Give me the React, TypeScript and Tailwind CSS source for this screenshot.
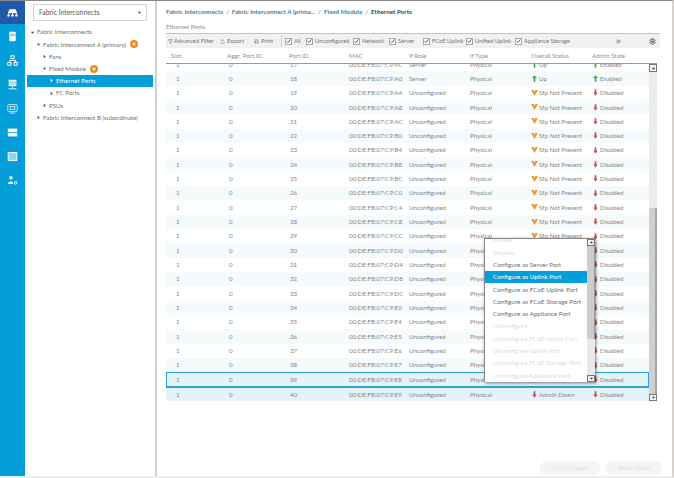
import { FC, ReactNode } from 'react';
import { ChevronsRight, Printer, Settings, Upload } from 'lucide-react';

type Port = { id: number; mac: string; role: string; status: string; admin: string };

const macs = ['9C', 'A0', 'A4', 'A8', 'AC', 'B0', 'B4', 'B8', 'BC', 'C0', 'C4', 'C8', 'CC', 'D0', 'D4', 'D8', 'DC', 'E0', 'E4', 'E5', 'E6', 'E7', 'E8', 'E9'];

const ports: Port[] = macs.map((m, i) => {
  const id = 17 + i;
  return {
    id,
    mac: `00:DE:FB:07:C9:${m}`,
    role: id < 19 ? 'Server' : 'Unconfigured',
    status: id < 19 ? 'Up' : id < 30 ? 'Sfp Not Present' : 'Admin Down',
    admin: id < 19 ? 'Enabled' : 'Disabled',
  };
});

const menu = [
  { label: 'Enable', off: true },
  { label: 'Disable', off: true },
  { label: 'Configure as Server Port' },
  { label: 'Configure as Uplink Port', active: true },
  { label: 'Configure as FCoE Uplink Port' },
  { label: 'Configure as FCoE Storage Port' },
  { label: 'Configure as Appliance Port' },
  { label: 'Unconfigure', off: true },
  { label: 'Unconfigure FCoE Uplink Port', off: true },
  { label: 'Unconfigure Uplink Port', off: true },
  { label: 'Unconfigure FCoE Storage Port', off: true },
  { label: 'Unconfigure Appliance Port', off: true },
];

const filters = [
  { label: 'All', w: 'w-[21px]' },
  { label: 'Unconfigured', w: 'w-[47px]' },
  { label: 'Network', w: 'w-[36px]' },
  { label: 'Server', w: 'w-[34px]' },
  { label: 'FCoE Uplink', w: 'w-[43px]' },
  { label: 'Unified Uplink', w: 'w-[49px]' },
  { label: 'Appliance Storage', w: 'w-[90px]' },
];

const tree = [
  { label: 'Fabric Interconnects', pad: 'pl-[3px]', open: true },
  { label: 'Fabric Interconnect A (primary)', pad: 'pl-[9px]', open: true, badge: true },
  { label: 'Fans', pad: 'pl-[15px]' },
  { label: 'Fixed Module', pad: 'pl-[15px]', open: true, badge: true },
  { label: 'Ethernet Ports', pad: 'pl-[22px]', active: true },
  { label: 'FC Ports', pad: 'pl-[22px]' },
  { label: 'PSUs', pad: 'pl-[15px]' },
  { label: 'Fabric Interconnect B (subordinate)', pad: 'pl-[9px]' },
];

const rowCols = 'grid grid-cols-[61px_62px_60px_60px_61px_61px_61px_57px] items-center';

const Caret: FC<{ open?: boolean; white?: boolean }> = ({ open, white }) => (
  <svg viewBox="0 0 6 6" className="h-[5px] w-[5px] shrink-0">
    <path d={open ? 'M1 2 L5 2 L3 4.5 Z' : 'M2 1 L4.5 3 L2 5 Z'} fill={white ? '#fff' : '#444'} />
  </svg>
);

const ScrollUp = () => (
  <svg viewBox="0 0 6 6" className="h-[5px] w-[5px] shrink-0">
    <path d="M1 4 L5 4 L3 1.5 Z" fill="#333" />
  </svg>
);

const Badge = () => (
  <svg viewBox="0 0 10 10" className="ml-[2px] h-2 w-2 shrink-0">
    <circle cx="5" cy="5" r="5" fill="#ef8a24" />
    <path d="M2.5 3.5 L5 7.5 L7.5 3.5 L6 3.5 L5 5 L4 3.5 Z" fill="#fff" />
  </svg>
);

const StatusIcon: FC<{ status: string }> = ({ status }) => {
  if (status === 'Up' || status === 'Enabled') {
    return (
      <svg viewBox="0 0 6 8" className="h-[7px] w-[5px] shrink-0">
        <path d="M3 0 L6 3.5 L4 3.5 L4 8 L2 8 L2 3.5 L0 3.5 Z" fill="#2fae3b" />
      </svg>
    );
  }
  if (status === 'Sfp Not Present') {
    return (
      <svg viewBox="0 0 8 7" className="h-[6px] w-[7px] shrink-0">
        <path d="M0 0 L3 0 L4 2 L5 0 L8 0 L4 7 Z" fill="#f0962a" />
      </svg>
    );
  }
  return (
    <svg viewBox="0 0 6 8" className="h-[7px] w-[5px] shrink-0">
      <path d="M2 0 H4 V4 L5.5 4 L3 8 L0.5 4 L2 4 Z" fill="#d0454e" />
    </svg>
  );
};

const Check: FC<{ label: string; w: string }> = ({ label, w }) => (
  <div className={`flex items-center gap-[2px] ${w}`}>
    <span className="flex h-[7px] w-[7px] shrink-0 items-center justify-center border border-[#a8a8a8] bg-white">
      <svg viewBox="0 0 8 8" className="h-[6px] w-[6px]">
        <path d="M1 4.5 L3 6.5 L7 1.5" fill="none" stroke="#333" strokeWidth="1.3" />
      </svg>
    </span>
    <span className="whitespace-nowrap">{label}</span>
  </div>
);

const NavIcon: FC<{ children: ReactNode; active?: boolean }> = ({ children, active }) => (
  <div className={`flex w-full items-center justify-center ${active ? 'h-[23px] bg-[#1e5aa8]' : 'h-6'}`}>
    <svg viewBox="0 0 14 14" className="h-[11px] w-[11px]" fill="none" stroke="#fff" strokeWidth="1.2">
      {children}
    </svg>
  </div>
);

const Sidebar = () => (
  <div className="flex w-[25px] shrink-0 flex-col bg-[#049fd9]">
    <NavIcon active>
      <path d="M3 3 H11 L13 8 H1 Z" fill="#fff" stroke="none" />
      <path d="M2 8 V11 M7 8 V11 M12 8 V11" />
      <path d="M0.5 11 H3.5 M5.5 11 H8.5 M10.5 11 H13.5" strokeWidth="2" />
    </NavIcon>
    <NavIcon>
      <rect x="3" y="1" width="8" height="12" rx="1" fill="#fff" stroke="none" />
      <path d="M4 4 H10 M4 6 H10" stroke="#049fd9" strokeWidth="0.8" />
    </NavIcon>
    <NavIcon>
      <rect x="5" y="1" width="4" height="3.5" />
      <rect x="1" y="9.5" width="4" height="3.5" />
      <rect x="9" y="9.5" width="4" height="3.5" />
      <path d="M7 4.5 V7 M3 9.5 V7 H11 V9.5" />
    </NavIcon>
    <NavIcon>
      <rect x="2" y="1" width="10" height="8" fill="#fff" stroke="none" />
      <path d="M2 4 H12 M2 6.5 H12" stroke="#049fd9" strokeWidth="0.8" />
      <path d="M7 9 V11 M2 12.5 H12" />
    </NavIcon>
    <NavIcon>
      <rect x="1" y="2" width="12" height="9" rx="1" strokeWidth="0.9" />
      <rect x="4" y="4.5" width="6" height="4" strokeWidth="0.9" />
      <path d="M4 12.8 H10" strokeWidth="0.9" />
    </NavIcon>
    <NavIcon>
      <rect x="1" y="2" width="12" height="4.5" fill="#fff" stroke="none" />
      <rect x="1" y="7.5" width="12" height="4.5" fill="#fff" stroke="none" />
    </NavIcon>
    <NavIcon>
      <rect x="1.5" y="2" width="11" height="10" fill="#8fd3ee" stroke="#fff" />
    </NavIcon>
    <NavIcon>
      <circle cx="5" cy="3.5" r="2.2" fill="#fff" stroke="none" />
      <path d="M1 11.5 C1 7 9 7 7.5 11.5 Z" fill="#fff" stroke="none" />
      <circle cx="11" cy="10" r="1.7" />
    </NavIcon>
  </div>
);

const TreePanel = () => (
  <div className="flex w-[130px] shrink-0 flex-col">
    <div className="mx-2 mt-[3px] flex h-[17px] items-center justify-between border border-[#d4d4d4] pl-[5px] pr-1 text-[6.8px] text-[#555]">
      <span>Fabric Interconnects</span>
      <Caret open />
    </div>
    <ul className="mr-[2px] mt-[5px] pl-[2px] text-[6.2px] text-[#707070]">
      {tree.map(n => (
        <li
          key={n.label}
          className={`flex h-[12.2px] items-center gap-[2px] ${n.pad} ${n.active ? 'bg-[#049fd9] text-white' : ''}`}
        >
          <Caret open={n.open} white={n.active} />
          <span className="whitespace-nowrap">{n.label}</span>
          {n.badge && <Badge />}
        </li>
      ))}
    </ul>
  </div>
);

const Breadcrumb = () => (
  <div className="flex h-[21px] items-center gap-[3px] whitespace-nowrap text-[6.3px] font-bold text-[#2a88ad]">
    <span>Fabric Interconnects</span>
    <span className="font-normal text-[#777]">/</span>
    <span>Fabric Interconnect A (prima...</span>
    <span className="font-normal text-[#777]">/</span>
    <span>Fixed Module</span>
    <span className="font-normal text-[#777]">/</span>
    <span className="text-[#39424a]">Ethernet Ports</span>
  </div>
);

const Toolbar = () => (
  <div className="flex h-[15px] w-[494px] items-center border-t border-[#c4c4c4] bg-[#f1f1f1] text-[5.8px] text-[#747474]">
    <div className="flex w-[54px] items-center gap-[1px] pl-[2px]">
      <svg viewBox="0 0 8 8" className="h-[5px] w-[5px]">
        <path d="M0.5 1 H7.5 L5 4 V7 L3 6 V4 Z" fill="none" stroke="#666" strokeWidth="0.8" />
      </svg>
      <span className="whitespace-nowrap">Advanced Filter</span>
    </div>
    <div className="flex w-[34px] items-center gap-[2px]">
      <Upload className="h-[5px] w-[5px]" />
      <span>Export</span>
    </div>
    <div className="flex w-[27px] items-center gap-[2px]">
      <Printer className="h-[5px] w-[5px]" />
      <span>Print</span>
    </div>
    <div className="mr-[3px] h-3 w-px bg-[#d2d2d2]" />
    {filters.map(f => (
      <Check key={f.label} label={f.label} w={f.w} />
    ))}
    <ChevronsRight className="ml-[10px] h-[7px] w-[7px] text-[#444]" strokeWidth={2.5} />
    <Settings className="ml-[27px] h-[7px] w-[7px] text-[#333]" strokeWidth={2.5} />
  </div>
);

const PortRow: FC<{ port: Port }> = ({ port }) => {
  const selected = port.id === 39;
  const last = port.id === 40;
  let tone = port.id % 2 === 0 ? 'bg-[#f5fafd]' : 'bg-white';
  if (selected) tone = 'bg-[#e4f2f9] outline outline-1 -outline-offset-1 outline-[#29a6d8]';
  if (last) tone = 'bg-[#e4f2f9] border-t border-[#29a6d8]';
  return (
    <div className={`${rowCols} h-[14.34px] text-[6.2px] text-[#858585] ${tone}`}>
      <span className="pl-[10px]">1</span>
      <span className="pl-[2px]">0</span>
      <span className="pl-[1px]">{port.id}</span>
      <span className="whitespace-nowrap">{port.mac}</span>
      <span>{port.role}</span>
      <span>Physical</span>
      <span className="flex items-center gap-[2px] whitespace-nowrap">
        <span className="flex w-[6px] justify-center">
          <StatusIcon status={port.status} />
        </span>
        {port.status}
      </span>
      <span className="flex items-center gap-[2px] pl-[1px]">
        <StatusIcon status={port.admin} />
        {port.admin}
      </span>
    </div>
  );
};

const Scrollbar = () => (
  <div className="flex h-full w-[8px] shrink-0 flex-col bg-[#ececec]">
    <div className="flex h-[8px] items-center justify-center border border-[#777] bg-[#f2f2f2]">
      <ScrollUp />
    </div>
    <div className="mt-[136px] flex-1 border-r-2 border-[#a5a5a5] bg-[#cfcfcf]" />
    <div className="flex h-[7px] items-center justify-center border border-[#777] bg-[#f2f2f2]">
      <Caret open />
    </div>
  </div>
);

const PortMenu = () => (
  <div className="absolute left-[484px] top-[237px] flex h-[144px] w-[111px] overflow-hidden border-l border-t border-[#888] bg-white shadow-[1px_1px_3px_rgba(0,0,0,0.5)]">
    <ul className="-mt-[5px] flex-1 text-[6.4px]">
      {menu.map(m => (
        <li
          key={m.label}
          className={`flex h-[12.3px] items-center whitespace-nowrap pl-[8px] ${
            m.active ? 'bg-[#049fd9] text-white' : m.off ? 'text-[#dcdcdc]' : 'text-[#707070]'
          }`}
        >
          {m.label}
        </li>
      ))}
    </ul>
    <div className="flex w-[8px] shrink-0 flex-col bg-[#e9e9e9]">
      <div className="flex h-[7px] items-center justify-center border border-[#777] bg-[#f2f2f2]">
        <ScrollUp />
      </div>
      <div className="h-[93px] border-r border-[#999] bg-[#cdcdcd]" />
      <div className="mt-auto flex h-[7px] items-center justify-center border border-[#777] bg-[#f2f2f2]">
        <Caret open />
      </div>
    </div>
  </div>
);

const PortTable = () => (
  <div className="w-[491px]">
    <div className={`${rowCols} mt-[1px] h-[14px] w-[483px] text-[6.2px] text-[#8f8f8f]`}>
      <span className="pl-[5px]">Slot</span>
      <span>Aggr. Port ID</span>
      <span>Port ID</span>
      <span>MAC</span>
      <span>If Role</span>
      <span>If Type</span>
      <span>Overall Status</span>
      <span>Admin State</span>
    </div>
    <div className="flex h-[338px] overflow-hidden border-t border-[#9a9a9a]">
      <div className="h-full w-[483px] overflow-hidden">
        <div className="-mt-[7px]">
          {ports.map(p => (
            <PortRow key={p.id} port={p} />
          ))}
        </div>
      </div>
      <Scrollbar />
    </div>
  </div>
);

const Footer = () => (
  <div className="mt-auto flex justify-end gap-[5px] pb-[1px] pr-[10px] text-[5.8px] text-[#e2e2e2]">
    <span className="flex h-[14px] w-[60px] items-center justify-center rounded-full bg-[#f4f4f4]">Save Changes</span>
    <span className="flex h-[14px] w-[57px] items-center justify-center rounded-full bg-[#f4f4f4]">Reset Values</span>
  </div>
);

export default function App() {
  return (
    <div
      className="relative flex h-[478px] w-[674px] overflow-hidden border-b-2 border-r-2 border-t border-b-[#e9eef0] border-r-[#d6d3ce] border-t-[#8a8a8a] bg-white"
      style={{ fontFamily: 'Lato, "Noto Sans", sans-serif' }}
    >
      <Sidebar />
      <TreePanel />
      <div className="w-[2px] shrink-0 bg-[#d2d2d2]" />
      <main className="flex min-w-0 flex-1 flex-col pl-[9px]">
        <Breadcrumb />
        <div className="mb-[2px] flex h-[9px] items-center text-[6px] font-bold text-[#a5a5a5]">Ethernet Ports</div>
        <Toolbar />
        <PortTable />
        <Footer />
      </main>
      <PortMenu />
    </div>
  );
}
